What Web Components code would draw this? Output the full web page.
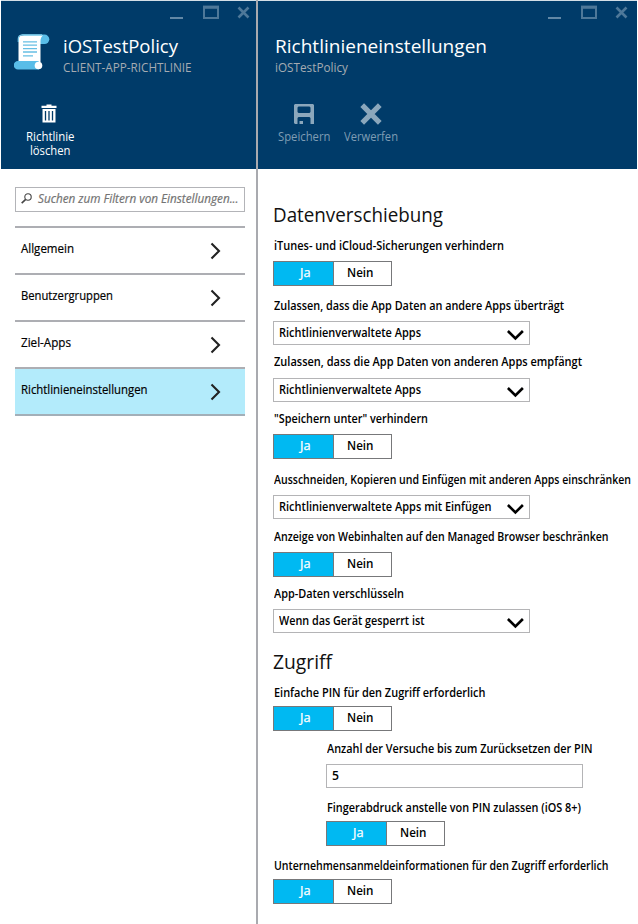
<!DOCTYPE html>
<html lang="de">
<head>
<meta charset="utf-8">
<title>Richtlinieneinstellungen</title>
<style>
html,body{margin:0;background:#fff}
body{width:638px;height:924px;overflow:hidden;font-family:"Open Sans","Noto Sans",sans-serif;font-size:12px;color:#000}
</style>
</head>
<body>
<policy-page></policy-page>
<script>
const define=(name,html,setup)=>customElements.define(name,class extends HTMLElement{
  connectedCallback(){
    if(this.shadowRoot)return;
    const t=document.createElement('template');
    t.innerHTML=html;
    this.attachShadow({mode:'open'}).append(t.content.cloneNode(true));
    if(setup)setup(this,this.shadowRoot);
  }
});

/* Text condensed to the width given in the "w" attribute. */
define('fit-text',`<style>
:host{display:block;height:16px;line-height:16px;white-space:nowrap;flex:none}
span{display:inline-block;transform-origin:0 50%}
</style><span><slot></slot></span>`,(el,root)=>{
  const w=parseFloat(el.getAttribute('w')),s=root.querySelector('span');
  el.style.width=w+'px';
  const n=s.offsetWidth;
  if(n)s.style.transform='scaleX('+(w/s.getBoundingClientRect().width)+')';
});

define('window-controls',`<style>
:host{display:flex;justify-content:flex-end;height:23px}
svg{display:block}
</style>
<svg width="82" height="23" fill="none" stroke="#4e7899"><path d="M1 17H14" stroke-width="2" stroke="#6288a6"/><path d="M34 6.2H50" stroke-width="3.2"/><path d="M35 5V17H49V5" stroke-width="2"/><path d="M69.5 6.5L79.5 16.5M79.5 6.5L69.5 16.5" stroke-width="2.6"/></svg>`);

define('blade-header',`<style>
:host{display:flex;flex-direction:column;box-sizing:border-box;height:169px;background:#003b69;border-top:1px solid #d4dfe7;color:#fff}
window-controls{padding-right:var(--wc)}
.head{display:flex;height:48px;margin-top:9px;padding-left:var(--pad)}
.titles{display:flex;flex-direction:column}
.commands{display:flex;margin-top:22px;padding-left:var(--cmd)}
</style>
<window-controls></window-controls>
<div class="head"><slot name="icon"></slot><div class="titles"><slot name="title"></slot><slot name="sub"></slot></div></div>
<div class="commands"><slot></slot></div>`);

define('command-button',`<style>
:host{display:flex;flex-direction:column;align-items:center;line-height:14px}
.i{display:flex;height:27px;align-items:flex-start}
</style><div class="i"><slot name="icon"></slot></div><slot></slot>`);

define('filter-box',`<style>
:host{display:flex;box-sizing:border-box;width:230px;height:25px;border:1px solid #b3b4b8;padding:3px 0 0 5px;gap:5px;color:#737373;font-style:italic}
svg{flex:none;margin-top:1px}
</style>
<svg width="12" height="14" viewBox="0 0 12 14" fill="none" stroke="#444"><circle cx="7" cy="5" r="3.2" stroke-width="1.1"/><path d="M4.700 7.400L.7 11.200" stroke-width="1.6"/></svg><slot></slot>`);

define('nav-item',`<style>
:host{display:flex;box-sizing:border-box;width:230px;height:47px;border-top:2px solid #adaeb3;padding:0 24px 0 6.5px;justify-content:space-between}
:host([selected]){background:#b3ebfb;height:49px;border-bottom:2px solid #a3afb8}
.t{padding-top:13px}
svg{display:block;margin-top:14px}
</style><div class="t"><slot></slot></div>
<svg width="11" height="18" fill="none" stroke="#222" stroke-width="2.1"><path d="M1.500 1.500L9 9L1.500 16.500"/></svg>`);

define('yes-no',`<style>
:host{display:flex;box-sizing:border-box;width:119px;height:25px;border:1px solid #77787a;background:#fff}
div{box-sizing:border-box;padding-top:3px}
.y{width:60px;background:#00b9f2;color:#fff;border-right:1px solid #77787a;padding-left:26px;font-weight:400;-webkit-text-stroke:.25px #fff}
.n{padding-left:13px}
</style><div class="y"><fit-text w="10.5">Ja</fit-text></div><div class="n"><fit-text w="26.5">Nein</fit-text></div>`);

define('drop-down',`<style>
:host{display:flex;box-sizing:border-box;width:257px;height:24px;border:1px solid #b4b4b6;padding:3px 5px 0 5px;justify-content:space-between}
svg{display:block;margin-top:5px}
</style><slot></slot><svg width="17" height="11" fill="none" stroke="#000" stroke-width="2.6"><path d="M.9 1L8.400 8.500L15.900 1"/></svg>`);

define('text-field',`<style>
:host{display:block;box-sizing:border-box;width:257px;height:24px;border:1px solid #b4b4b6;padding:3px 0 0 4.5px}
</style><slot></slot>`);

/* Label above a control; --top and --gap set the vertical rhythm. */
define('setting-field',`<style>
:host{display:flex;flex-direction:column;margin-top:var(--top,8px)}
:host([nested]){margin-left:53px}
::slotted(:not([slot])){margin-top:calc(var(--gap,8px) - 1px)}
.l{padding:1px 0 0 .5px}
</style><div class="l"><slot name="label"></slot></div><slot></slot>`);

define('section-title',`<style>
:host{display:block;font-size:19.500px;height:25px;padding-top:1px;color:#111;font-weight:400}
::slotted(fit-text){height:26px!important;line-height:26px!important}
</style><slot></slot>`);

define('policy-page',`<style>
:host{display:grid;grid-template-columns:256.500px 1fr;width:638px;height:924px}
.left{display:flex;flex-direction:column;padding-left:1px}
.right{display:flex;flex-direction:column;margin-left:-.5px;border-left:2px solid #a9aaaf;padding-right:1px;overflow:hidden}
.title{font-size:19px;height:26px;line-height:26px}
.sub{color:#a5abb2;height:16px;margin-top:1px}
.left blade-header{--wc:5.5px;--pad:13px;--cmd:25px}
.right blade-header{--wc:8px;--pad:17px;--cmd:20px}
.nav{display:flex;flex-direction:column;padding:18px 0 0 13.500px;-webkit-text-stroke:.2px #000}
filter-box{margin-bottom:14px;-webkit-text-stroke:.2px #737373}
.body{display:flex;flex-direction:column;align-items:flex-start;padding:32px 0 0 15px;font-weight:600}
.doc{margin-right:13px}
.dim{color:#7f9db4}
fit-text.c{height:14px;line-height:14px}
</style>
<section class="left">
<blade-header>
<svg slot="icon" class="doc" width="36" height="38" viewBox="0 0 36 38"><path d="M7 1.500H30.500a4.800 4.800 0 0 1 0 9.600H26Z" fill="#59bde8"/><path d="M8 2.500H29Q26.500 4 26.500 8V29H4.500V7Q4.500 2.500 8 2.500Z" fill="#fff"/><path d="M4.300 9V6Q4.300 2 8.500 1.800H28" fill="none" stroke="#7fcdec" stroke-width="1.200"/><path d="M4 28H25Q22 31 25 36.500H4a4.250 4.250 0 0 1 0-8.500Z" fill="#59bde8"/><circle cx="24.500" cy="32.500" r="3.800" fill="#fff"/><path d="M9 8.800H23M9 12.200H23M9 15.600H23M9 19H23M9 22.800H19" stroke="#67bfe4" stroke-width="1.300"/></svg>
<fit-text slot="title" class="title" w="115">iOSTestPolicy</fit-text>
<fit-text slot="sub" class="sub" w="128.5">CLIENT-APP-RICHTLINIE</fit-text>
<command-button>
<svg slot="icon" width="18" height="21" viewBox="0 0 18 21"><path d="M5.500 2.700V1.500H10.500V2.700H15.500V5H.5V2.700Z" fill="#fff"/><path d="M1.500 6H14.500V19.500H1.500Z" fill="#fff"/><path d="M4.500 8V17.500M8 8V17.500M11.500 8V17.500" stroke="#003b69" stroke-width="1.300"/></svg>
<fit-text class="c" w="48.5">Richtlinie</fit-text><fit-text class="c" w="40.5">löschen</fit-text>
</command-button>
</blade-header>
<div class="nav">
<filter-box><fit-text w="200.5">Suchen zum Filtern von Einstellungen...</fit-text></filter-box>
<nav-item><fit-text w="53">Allgemein</fit-text></nav-item>
<nav-item><fit-text w="92">Benutzergruppen</fit-text></nav-item>
<nav-item><fit-text w="50">Ziel-Apps</fit-text></nav-item>
<nav-item selected><fit-text w="126.5">Richtlinieneinstellungen</fit-text></nav-item>
</div>
</section>
<section class="right">
<blade-header>
<fit-text slot="title" class="title" w="212">Richtlinieneinstellungen</fit-text>
<fit-text slot="sub" class="sub" w="73">iOSTestPolicy</fit-text>
<command-button class="dim">
<svg slot="icon" width="20" height="22" viewBox="0 0 20 22"><path d="M1 1H19L20 2V21H16.500V15L15.500 14H4.500L3.500 15V21H1L0 20V2ZM3.500 4.500V9L4.500 10H15.500L16.500 9V4.500L15.500 3.500H4.500Z" fill="#8ba7bc" fill-rule="evenodd"/><path d="M5.500 18H9V21H5.500Z" fill="#8ba7bc"/></svg>
<fit-text class="c" w="52.5">Speichern</fit-text>
</command-button>
<command-button class="dim" style="margin-left:13px">
<svg slot="icon" width="22" height="22" fill="none" stroke="#8ba7bc" stroke-width="5.200"><path d="M2.200 2.200L19.800 19.800M19.800 2.200L2.200 19.800"/></svg>
<fit-text class="c" w="54">Verwerfen</fit-text>
</command-button>
</blade-header>
<div class="body">
<section-title><fit-text w="170">Datenverschiebung</fit-text></section-title>
<setting-field style="--top:10px"><fit-text slot="label" w="230">iTunes- und iCloud-Sicherungen verhindern</fit-text><yes-no></yes-no></setting-field>
<setting-field style="--top:11px"><fit-text slot="label" w="290">Zulassen, dass die App Daten an andere Apps überträgt</fit-text><drop-down><fit-text w="142">Richtlinienverwaltete Apps</fit-text></drop-down></setting-field>
<setting-field style="--gap:9px"><fit-text slot="label" w="308">Zulassen, dass die App Daten von anderen Apps empfängt</fit-text><drop-down><fit-text w="142">Richtlinienverwaltete Apps</fit-text></drop-down></setting-field>
<setting-field><fit-text slot="label" w="154">"Speichern unter" verhindern</fit-text><yes-no></yes-no></setting-field>
<setting-field style="--top:12px"><fit-text slot="label" w="357">Ausschneiden, Kopieren und Einfügen mit anderen Apps einschränken</fit-text><drop-down><fit-text w="212.5">Richtlinienverwaltete Apps mit Einfügen</fit-text></drop-down></setting-field>
<setting-field style="--top:9px"><fit-text slot="label" w="334.5">Anzeige von Webinhalten auf den Managed Browser beschränken</fit-text><yes-no></yes-no></setting-field>
<setting-field><fit-text slot="label" w="130">App-Daten verschlüsseln</fit-text><drop-down><fit-text w="145.5">Wenn das Gerät gesperrt ist</fit-text></drop-down></setting-field>
<section-title style="margin-top:15px"><fit-text w="59">Zugriff</fit-text></section-title>
<setting-field style="--top:10px;--gap:6px"><fit-text slot="label" w="211.5">Einfache PIN für den Zugriff erforderlich</fit-text><yes-no></yes-no></setting-field>
<setting-field nested style="--top:9px"><fit-text slot="label" w="265.5">Anzahl der Versuche bis zum Zurücksetzen der PIN</fit-text><text-field><fit-text w="7">5</fit-text></text-field></setting-field>
<setting-field nested style="--top:11px;--gap:6px"><fit-text slot="label" w="254">Fingerabdruck anstelle von PIN zulassen (iOS 8+)</fit-text><yes-no></yes-no></setting-field>
<setting-field style="--top:11px;--gap:6px"><fit-text slot="label" w="334.5">Unternehmensanmeldeinformationen für den Zugriff erforderlich</fit-text><yes-no></yes-no></setting-field>
</div>
</section>`);
</script>
</body>
</html>
